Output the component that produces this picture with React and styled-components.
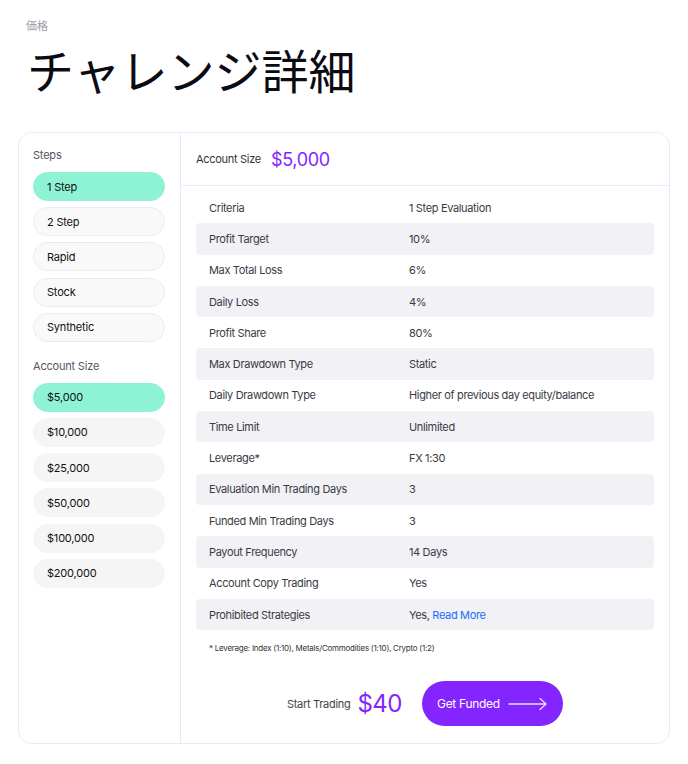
import React, { useState } from 'react';
import styled, { createGlobalStyle } from 'styled-components';

const GlobalStyle = createGlobalStyle`
  body {
    margin: 0;
    background: #fff;
    font-family: Inter, "Noto Sans", "Noto Sans CJK JP", sans-serif;
    color: #222;
  }
`

const Page = styled.div`
  padding: 18px 18px 20px;
`

/* Heading */

const Eyebrow = styled.div`
  margin-left: 8px;
  font-family: "Noto Sans CJK JP", sans-serif;
  font-size: 11px;
  line-height: 14px;
  color: #9d9da5;
`

const Title = styled.h1`
  margin: 9px 0 35px 9px;
  font-family: "Noto Sans CJK JP", sans-serif;
  font-weight: 400;
  font-size: 47px;
  line-height: 56px;
  letter-spacing: 0;
  color: #0b0b14;
`

/* Card */

const Card = styled.div`
  display: grid;
  grid-template-columns: 162px 1fr;
  border: 1px solid #efe6fd;
  border-radius: 14px;
`

const Sidebar = styled.div`
  border-right: 1px solid #efe6fd;
  padding: 15px 15px 20px 14px;
`

const GroupLabel = styled.div`
  font-size: 11px;
  line-height: 14px;
  letter-spacing: -0.2px;
  color: #55555f;
  margin: ${(p) => (p.$second ? '17px 0 10px' : '0 0 10px')};
`

const PillList = styled.div`
  display: flex;
  flex-direction: column;
  gap: 6.2px;
`

const Pill = styled.button`
  box-sizing: border-box;
  display: flex;
  align-items: center;
  width: 132px;
  height: 29px;
  padding: 0 13px;
  border-radius: 15px;
  font-family: Inter, sans-serif;
  font-size: 11px;
  letter-spacing: -0.2px;
  color: #111;
  cursor: pointer;
  border: 1px solid ${(p) => (p.$active ? '#8ef2d5' : p.$outlined ? '#ececec' : '#f5f5f5')};
  background: ${(p) => (p.$active ? '#8ef2d5' : p.$outlined ? '#f9f9f9' : '#f5f5f5')};
`

/* Details */

const Details = styled.div`
  display: flex;
  flex-direction: column;
`

const DetailsHeader = styled.div`
  display: flex;
  align-items: center;
  gap: 10px;
  height: 52px;
  padding: 0 15px;
  border-bottom: 1px solid #efe6fd;
`

const HeaderLabel = styled.span`
  font-size: 11px;
  letter-spacing: -0.3px;
  color: #333;
`

const HeaderPrice = styled.span`
  font-size: 18px;
  letter-spacing: -0.3px;
  color: #8424ff;
`

const Table = styled.div`
  padding: 6px 15px 0;
`

const Row = styled.div`
  display: grid;
  grid-template-columns: 200px 1fr;
  align-items: center;
  height: 31.3px;
  padding: 0 13px;
  border-radius: 4px;
  background: ${(p) => (p.$shaded ? '#f2f1f6' : 'transparent')};
  font-size: 11px;
  letter-spacing: -0.35px;
  color: #3a3a44;
`

const ReadMore = styled.a`
  color: #1a6cff;
  text-decoration: none;
`

const Footnote = styled.div`
  padding: 13px 28px 0;
  font-size: 8px;
  letter-spacing: -0.25px;
  color: #333;
`

const Footer = styled.div`
  display: flex;
  align-items: center;
  justify-content: center;
  padding: 28px 0 17px;
`

const StartLabel = styled.span`
  font-size: 11px;
  letter-spacing: -0.3px;
  color: #444;
  margin-right: 7px;
`

const Price = styled.span`
  font-size: 24px;
  font-weight: 400;
  letter-spacing: -0.5px;
  color: #8424ff;
  margin-right: 20px;
`

const FundButton = styled.button`
  display: flex;
  align-items: center;
  justify-content: space-between;
  box-sizing: border-box;
  width: 141px;
  height: 45px;
  padding: 0 15px;
  border: none;
  border-radius: 23px;
  background: #8424ff;
  color: #fff;
  font-family: Inter, sans-serif;
  font-size: 12px;
  letter-spacing: -0.3px;
  cursor: pointer;
`

const rows = [
  ['Criteria', '1 Step Evaluation'],
  ['Profit Target', '10%'],
  ['Max Total Loss', '6%'],
  ['Daily Loss', '4%'],
  ['Profit Share', '80%'],
  ['Max Drawdown Type', 'Static'],
  ['Daily Drawdown Type', 'Higher of previous day equity/balance'],
  ['Time Limit', 'Unlimited'],
  ['Leverage*', 'FX 1:30'],
  ['Evaluation Min Trading Days', '3'],
  ['Funded Min Trading Days', '3'],
  ['Payout Frequency', '14 Days'],
  ['Account Copy Trading', 'Yes'],
  ['Prohibited Strategies', null],
]

const steps = ['1 Step', '2 Step', 'Rapid', 'Stock', 'Synthetic']
const sizes = ['$5,000', '$10,000', '$25,000', '$50,000', '$100,000', '$200,000']

function Arrow() {
  return (
    <svg width="40" height="14" viewBox="0 0 40 14" fill="none">
      <path d="M1 7H38M32 1.5L38 7L32 12.5" stroke="#eadcff" strokeWidth="1.3" strokeLinecap="round" strokeLinejoin="round" />
    </svg>
  )
}

export default function App() {
  const [step, setStep] = useState('1 Step')
  const [size, setSize] = useState('$5,000')

  return (
    <Page>
      <GlobalStyle />
      <Eyebrow>価格</Eyebrow>
      <Title>チャレンジ詳細</Title>

      <Card>
        <Sidebar>
          <GroupLabel>Steps</GroupLabel>
          <PillList>
            {steps.map((s) => (
              <Pill key={s} $outlined $active={s === step} onClick={() => setStep(s)}>{s}</Pill>
            ))}
          </PillList>
          <GroupLabel $second>Account Size</GroupLabel>
          <PillList>
            {sizes.map((s) => (
              <Pill key={s} $active={s === size} onClick={() => setSize(s)}>{s}</Pill>
            ))}
          </PillList>
        </Sidebar>

        <Details>
          <DetailsHeader>
            <HeaderLabel>Account Size</HeaderLabel>
            <HeaderPrice>{size}</HeaderPrice>
          </DetailsHeader>
          <Table>
            {rows.map(([label, value], i) => (
              <Row key={label} $shaded={i % 2 === 1}>
                <span>{label}</span>
                <span>
                  {value ?? (<>Yes, <ReadMore href="#">Read More</ReadMore></>)}
                </span>
              </Row>
            ))}
          </Table>
          <Footnote>* Leverage: Index (1:10), Metals/Commodities (1:10), Crypto (1:2)</Footnote>
          <Footer>
            <StartLabel>Start Trading</StartLabel>
            <Price>$40</Price>
            <FundButton>
              Get Funded
              <Arrow />
            </FundButton>
          </Footer>
        </Details>
      </Card>
    </Page>
  )
}
